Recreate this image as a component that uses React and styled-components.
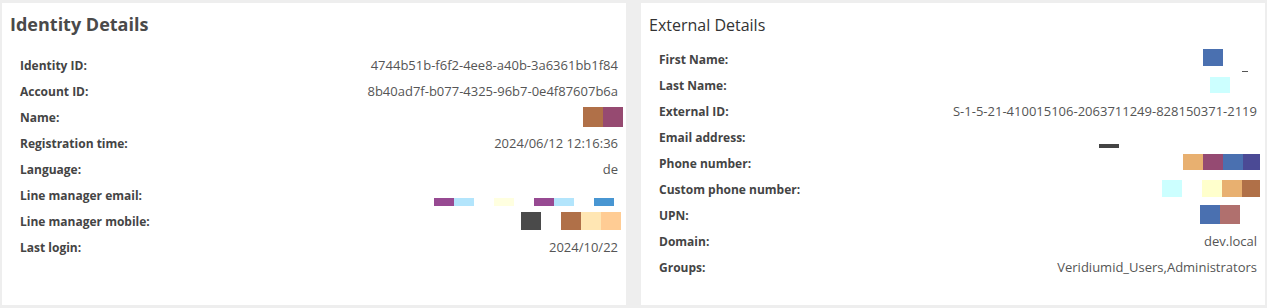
import React from "react";
import styled, { createGlobalStyle } from "styled-components";

const Global = createGlobalStyle`
  html, body { margin: 0; padding: 0; background: #eeeeee; }
  body { font-family: "Open Sans", "Liberation Sans", sans-serif; }
  * { box-sizing: border-box; }
`;

const Page = styled.div`
  display: grid;
  grid-template-columns: 624px 624px;
  column-gap: 15px;
  padding: 3px 2px 3px 2px;
  background: #eeeeee;
`;

const Card = styled.section`
  background: #ffffff;
  height: 302px;
  padding: ${(p) => (p.$variant === "bold" ? "9px 8px 0 8px" : "10px 8px 0 8px")};
  display: flex;
  flex-direction: column;
`;

const Title = styled.h2`
  margin: 0;
  font-size: ${(p) => (p.$variant === "bold" ? "18px" : "16px")};
  font-weight: ${(p) => (p.$variant === "bold" ? 700 : 400)};
  color: ${(p) => (p.$variant === "bold" ? "#4a4a4a" : "#333333")};
  line-height: 24px;
`;

const List = styled.dl`
  margin: ${(p) => (p.$variant === "bold" ? "16px 0 0 0" : "9px 0 0 0")};
  padding: 0 0 0 10px;
  display: flex;
  flex-direction: column;
`;

const Row = styled.div`
  height: 26px;
  display: flex;
  align-items: center;
  justify-content: space-between;
`;

const Label = styled.dt`
  font-size: 12px;
  font-weight: 700;
  color: #444444;
  white-space: nowrap;
`;

const Value = styled.dd`
  margin: 0 ${(p) => p.$overhang || 0}px 0 0;
  font-size: 13px;
  color: #555555;
  white-space: nowrap;
  display: flex;
  align-items: center;
`;

const Swatches = styled.span`
  display: inline-flex;
  align-items: center;
  transform: translateY(${(p) => p.$shift || 0}px);
`;

const Swatch = styled.span`
  display: inline-block;
  width: ${(p) => p.$w || 20}px;
  height: ${(p) => p.$h}px;
  background: ${(p) => p.$c};
`;

const Dash = styled.span`
  display: inline-block;
  width: 6px;
  height: 1px;
  background: #555555;
  margin-left: 19px;
  align-self: flex-end;
  margin-bottom: -6px;
`;

const blocks = (list, h) =>
  list.map((c, i) => <Swatch key={i} $c={c || "transparent"} $h={h} />);

const identity = [
  ["Identity ID:", "4744b51b-f6f2-4ee8-a40b-3a6361bb1f84"],
  ["Account ID:", "8b40ad7f-b077-4325-96b7-0e4f87607b6a"],
  ["Name:", <Swatches>{blocks(["#b07048", "#964a71"], 20)}</Swatches>, -5],
  ["Registration time:", "2024/06/12 12:16:36"],
  ["Language:", "de"],
  [
    "Line manager email:",
    <Swatches $shift={7}>
      {blocks(["#974a92", "#b3e5fc", null, "#ffffe0", null, "#974a92", "#b3e5fc", null, "#4896d2"], 8)}
    </Swatches>,
    4,
  ],
  [
    "Line manager mobile:",
    <Swatches>{blocks(["#4a4a4a", null, "#b07048", "#ffe6b3", "#ffcc94"], 18)}</Swatches>,
    -3,
  ],
  ["Last login:", "2024/10/22"],
];

const external = [
  [
    "First Name:",
    <Swatches $shift={-2}>
      <Swatch $c="#4a70b0" $h={17} />
      <Dash />
    </Swatches>,
    9,
  ],
  ["Last Name:", <Swatches>{blocks(["#ccffff"], 16)}</Swatches>, 27],
  ["External ID:", "S-1-5-21-410015106-2063711249-828150371-2119"],
  ["Email address:", <Swatches $shift={9}>{blocks(["#444444"], 4)}</Swatches>, 138],
  [
    "Phone number:",
    <Swatches $shift={-1}>
      {blocks(["#e8b070", "#954a72", "#4a70b0"], 16)}
      <Swatch $c="#4b4a95" $h={16} $w={17} />
    </Swatches>,
    -3,
  ],
  [
    "Custom phone number:",
    <Swatches $shift={-1}>
      {blocks(["#ccffff", null, "#ffffcc", "#e8b070"], 17)}
      <Swatch $c="#b07048" $h={17} $w={18} />
    </Swatches>,
    -3,
  ],
  ["UPN:", <Swatches $shift={-1}>{blocks(["#4a70b0", "#b0706e"], 19)}</Swatches>, 17],
  ["Domain:", "dev.local"],
  ["Groups:", "Veridiumid_Users,Administrators"],
];

const Details = ({ title, variant, rows }) => (
  <Card $variant={variant}>
    <Title $variant={variant}>{title}</Title>
    <List $variant={variant}>
      {rows.map(([label, value, overhang]) => (
        <Row key={label}>
          <Label>{label}</Label>
          <Value $overhang={overhang}>{value}</Value>
        </Row>
      ))}
    </List>
  </Card>
);

export default function App() {
  return (
    <>
      <Global />
      <Page>
        <Details title="Identity Details" variant="bold" rows={identity} />
        <Details title="External Details" variant="light" rows={external} />
      </Page>
    </>
  );
}
